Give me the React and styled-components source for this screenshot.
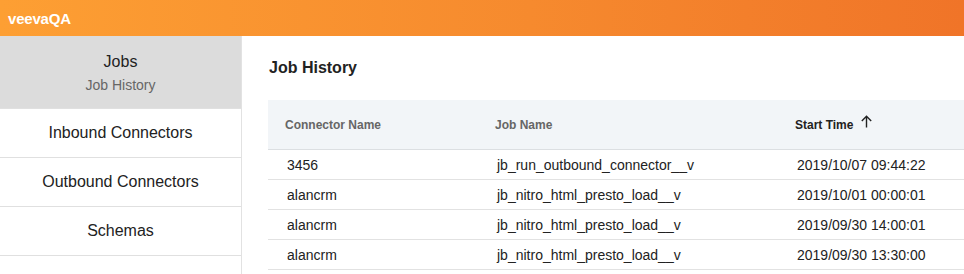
import React from "react";
import styled, { createGlobalStyle } from "styled-components";

const GlobalStyle = createGlobalStyle`
  body {
    margin: 0;
    font-family: "Liberation Sans", Arial, sans-serif;
    color: #222;
    background: #fff;
  }
`;

const Page = styled.div`
  display: flex;
  flex-direction: column;
  height: 100vh;
  overflow: hidden;
`;

const TopBar = styled.header`
  height: 36px;
  display: flex;
  align-items: center;
  padding: 0 8px;
  background: linear-gradient(90deg, #fd9f33 0%, #f68a2e 55%, #f07428 100%);
  color: #fff;
  font-weight: bold;
  font-size: 15px;
  letter-spacing: -0.2px;
  flex-shrink: 0;
`;

const Body = styled.div`
  display: flex;
  flex: 1;
  min-height: 0;
`;

const Sidebar = styled.nav`
  width: 241px;
  border-right: 1px solid #e2e2e2;
  flex-shrink: 0;
  display: flex;
  flex-direction: column;
`;

const NavItem = styled.div`
  display: flex;
  flex-direction: column;
  align-items: center;
  justify-content: center;
  height: ${(p) => (p.$active ? "70px" : "48px")};
  padding-top: ${(p) => (p.$active ? "2px" : "0")};
  background: ${(p) => (p.$active ? "#dcdcdc" : "#fff")};
  border-bottom: 1px solid #e0e0e0;
  font-size: 16px;
  color: #222;
  flex-shrink: 0;
`;

const NavSub = styled.div`
  font-size: 14px;
  color: #666;
  margin-top: 6px;
`;

const Main = styled.main`
  flex: 1;
  padding: 23px 0 0 26px;
  min-width: 0;
`;

const Title = styled.h2`
  margin: 0 0 23px 1px;
  font-size: 16px;
  font-weight: bold;
  line-height: 18px;
  color: #222;
`;

const Table = styled.div`
  display: grid;
  grid-template-columns: 210px 300px 1fr;
`;

const HeadCell = styled.div`
  height: 49px;
  display: flex;
  align-items: center;
  padding-left: 17px;
  background: #f2f5f8;
  border-bottom: 1px solid #dcdfe2;
  font-size: 12px;
  font-weight: bold;
  color: ${(p) => (p.$sorted ? "#222" : "#666")};
`;

const Cell = styled.div`
  height: 29px;
  display: flex;
  align-items: center;
  padding-left: 19px;
  border-bottom: 1px solid #e2e2e2;
  font-size: 14px;
  color: #222;
`;

const SortIcon = styled.svg`
  margin-left: 7px;
  margin-top: -7px;
`;

const rows = [
  ["3456", "jb_run_outbound_connector__v", "2019/10/07 09:44:22"],
  ["alancrm", "jb_nitro_html_presto_load__v", "2019/10/01 00:00:01"],
  ["alancrm", "jb_nitro_html_presto_load__v", "2019/09/30 14:00:01"],
  ["alancrm", "jb_nitro_html_presto_load__v", "2019/09/30 13:30:00"],
];

export default function App() {
  return (
    <Page>
      <GlobalStyle />
      <TopBar>veevaQA</TopBar>
      <Body>
        <Sidebar>
          <NavItem $active>
            Jobs
            <NavSub>Job History</NavSub>
          </NavItem>
          <NavItem>Inbound Connectors</NavItem>
          <NavItem>Outbound Connectors</NavItem>
          <NavItem>Schemas</NavItem>
        </Sidebar>
        <Main>
          <Title>Job History</Title>
          <Table>
            <HeadCell>Connector Name</HeadCell>
            <HeadCell>Job Name</HeadCell>
            <HeadCell $sorted>
              Start Time
              <SortIcon width="13" height="13" viewBox="0 0 13 13" fill="none" stroke="#222" strokeWidth="1.4">
                <path d="M6.5 12.5V1.5M1.8 6L6.5 1.3 11.2 6" />
              </SortIcon>
            </HeadCell>
            {rows.map((r, i) =>
              r.map((c, j) => <Cell key={i + "-" + j}>{c}</Cell>)
            )}
          </Table>
        </Main>
      </Body>
    </Page>
  );
}
